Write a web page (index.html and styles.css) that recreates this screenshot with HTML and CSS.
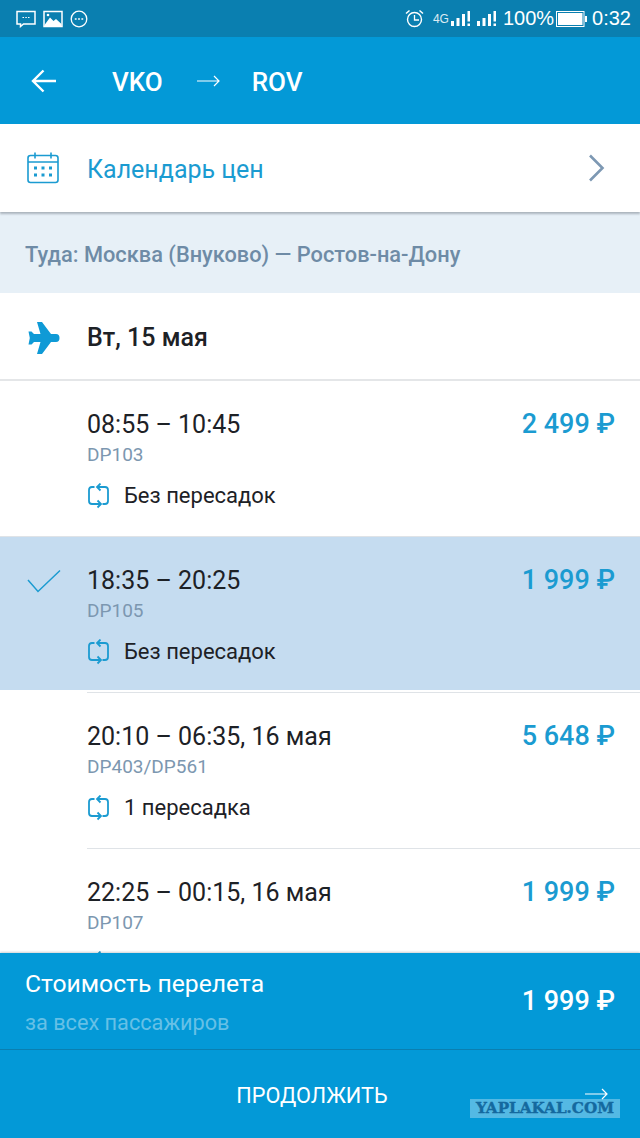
FILE: index.html
```html
<!DOCTYPE html>
<html lang="ru">
<head>
    <meta charset="UTF-8">
    <meta name="viewport" content="width=device-width, initial-scale=1.0">
    <title>VKO - ROV</title>
    <link rel="stylesheet" href="styles.css">
</head>
<body>
    <svg class="sprites" width="0" height="0">
        <symbol id="stops" viewBox="0 0 23 26">
            <path d="M7.500 4H5Q2 4 2 7V18Q2 21 5 21H14M10.500 17.500L14 21L10.500 24.500" fill="none" stroke="currentColor" stroke-width="1.800"/>
            <path d="M15.500 21H18Q21 21 21 18V7Q21 4 18 4H10M13.500 0.500L10 4L13.500 7.500" fill="none" stroke="currentColor" stroke-width="1.800"/>
        </symbol>
    </svg>

    <div class="status-bar">
        <div class="status-left">
            <svg class="ic" width="20" height="18" viewBox="0 0 20 18"><path d="M1 1.500H19V14H7.500L4.500 16.500V14H1Z" fill="none" stroke="#fff" stroke-width="1.500"/><path d="M6.500 7.500h1.500M9.300 7.500h1.500M12 7.500h1.500" stroke="#fff" stroke-width="1.200"/></svg>
            <svg class="ic" width="20" height="18" viewBox="0 0 20 18"><rect x="1" y="1.500" width="18" height="15" fill="#0a7fb0" stroke="#fff" stroke-width="1.500"/><path d="M1.500 15L7 7.500L10.500 11L13 9L18.500 14V16H1.500Z" fill="#fff"/><circle cx="5" cy="5" r="1.300" fill="#fff"/></svg>
            <svg class="ic" width="18" height="18" viewBox="0 0 18 18"><circle cx="9" cy="9" r="7.800" fill="none" stroke="#fff" stroke-width="1.300"/><path d="M4.800 9h1.800M8.100 9h1.800M11.400 9h1.800" stroke="#fff" stroke-width="1.300"/></svg>
        </div>
        <div class="status-right">
            <svg class="ic alarm" width="19" height="19" viewBox="0 0 19 19"><circle cx="9.500" cy="10.500" r="7" fill="none" stroke="#fff" stroke-width="1.400"/><path d="M9.500 6V11H14" fill="none" stroke="#fff" stroke-width="1.300"/><path d="M1 4.500L4.500 1.500M18 4.500L14.500 1.500" stroke="#fff" stroke-width="1.500"/></svg>
            <span class="net">4G</span>
            <svg class="ic" width="21" height="17" viewBox="0 0 21 17"><path d="M1 11h3v5H1zM6.500 8h3v8h-3zM12 4h3v12h-3z" fill="#fff"/><path d="M17.500 1h2.500v10.500h-2.500zM17.500 13.500h2.500v2.500h-2.500z" fill="#fff"/></svg>
            <svg class="ic signal" width="21" height="17" viewBox="0 0 21 17"><path d="M1 11h3v5H1zM6.500 8h3v8h-3zM12 4h3v12h-3z" fill="#fff"/><path d="M17.500 1h2.500v10.500h-2.500zM17.500 13.500h2.500v2.500h-2.500z" fill="#fff"/></svg>
            <span class="pct">100%</span>
            <svg class="ic" width="31" height="16" viewBox="0 0 31 16"><rect x="0.500" y="0.500" width="27.500" height="15" fill="none" stroke="#fff"/><rect x="2" y="2" width="24.500" height="12" fill="#fff"/><rect x="29" y="5" width="2" height="6" fill="#fff"/></svg>
            <span class="clock">0:32</span>
        </div>
    </div>

    <header class="app-bar">
        <svg class="back" width="26" height="24" viewBox="0 0 26 24"><path d="M25 12H2M12.500 1.500L2 12L12.500 22.500" fill="none" stroke="#fff" stroke-width="2.400"/></svg>
        <span class="code">VKO</span>
        <svg class="route-arrow" width="23" height="12" viewBox="0 0 23 12"><path d="M0 6H22M17 1L22 6L17 11" fill="none" stroke="#fff" stroke-width="1.200"/></svg>
        <span class="code">ROV</span>
    </header>

    <div class="calendar-row">
        <svg class="row-icon" width="32" height="32" viewBox="0 0 32 32">
            <rect x="1" y="3.500" width="30" height="27" rx="2.500" fill="none" stroke="#1b9bd1" stroke-width="1.600"/>
            <path d="M1 10H31M8 0.500V6.500M24 0.500V6.500" fill="none" stroke="#1b9bd1" stroke-width="1.600"/>
            <path d="M7 14.500h3v3H7zM14.500 14.500h3v3h-3zM22 14.500h3v3h-3zM7 21.500h3v3H7zM14.500 21.500h3v3h-3zM22 21.500h3v3h-3z" fill="#1b9bd1"/>
        </svg>
        <span class="calendar-label">Календарь цен</span>
        <svg class="chevron" width="18" height="28" viewBox="0 0 18 28"><path d="M2 1.500L14.500 14L2 26.500" fill="none" stroke="#7d98b3" stroke-width="2.600"/></svg>
    </div>

    <div class="direction">Туда: Москва (Внуково) — Ростов-на-Дону</div>

    <div class="date-row">
        <svg class="row-icon plane" width="33" height="32" viewBox="0 0 33 32"><path d="M10 0H15L24 12H29Q32.500 12 32.500 16Q32.500 20 29 20H24L15 32H10L13.500 20H7L4.500 22.500H1.500L2.800 16L1.500 9.500H4.500L7 12H13.500Z" fill="#0f9ad6"/></svg>
        <span class="date-label">Вт, 15 мая</span>
    </div>

    <main class="flights">
        <div class="flight">
            <div class="flight-mark"></div>
            <div class="flight-info">
                <div class="times">08:55 – 10:45</div>
                <div class="number">DP103</div>
                <div class="stops"><svg class="stops-icon" width="23" height="26"><use href="#stops"/></svg>Без пересадок</div>
            </div>
            <div class="price">2 499 ₽</div>
        </div>
        <div class="sep"></div>
        <div class="flight selected">
            <div class="flight-mark">
                <svg width="34" height="24" viewBox="0 0 34 24"><path d="M1 11L11 22.500L33 1.500" fill="none" stroke="#1b9bd1" stroke-width="1.500"/></svg>
            </div>
            <div class="flight-info">
                <div class="times">18:35 – 20:25</div>
                <div class="number">DP105</div>
                <div class="stops"><svg class="stops-icon" width="23" height="26"><use href="#stops"/></svg>Без пересадок</div>
            </div>
            <div class="price">1 999 ₽</div>
        </div>
        <div class="sep inset after-selected"></div>
        <div class="flight">
            <div class="flight-mark"></div>
            <div class="flight-info">
                <div class="times">20:10 – 06:35, 16 мая</div>
                <div class="number">DP403/DP561</div>
                <div class="stops"><svg class="stops-icon" width="23" height="26"><use href="#stops"/></svg>1 пересадка</div>
            </div>
            <div class="price">5 648 ₽</div>
        </div>
        <div class="sep inset"></div>
        <div class="flight">
            <div class="flight-mark"></div>
            <div class="flight-info">
                <div class="times">22:25 – 00:15, 16 мая</div>
                <div class="number">DP107</div>
                <div class="stops"><svg class="stops-icon" width="23" height="26"><use href="#stops"/></svg></div>
            </div>
            <div class="price">1 999 ₽</div>
        </div>
    </main>

    <div class="summary">
        <div>
            <div class="summary-title">Стоимость перелета</div>
            <div class="summary-sub">за всех пассажиров</div>
        </div>
        <div class="summary-price">1 999 ₽</div>
    </div>

    <div class="continue">
        <span>ПРОДОЛЖИТЬ</span>
        <svg class="continue-arrow" width="23" height="12" viewBox="0 0 23 12"><path d="M0 6H22M17 1L22 6L17 11" fill="none" stroke="#fff" stroke-width="1.200"/></svg>
    </div>

    <div class="watermark">YAPLAKAL.COM</div>
</body>
</html>
```

FILE: styles.css
```css
* {
    box-sizing: border-box;
}
html, body {
    margin: 0;
    height: 100%;
}
body {
    position: relative;
    display: flex;
    flex-direction: column;
    width: 640px;
    height: 1138px;
    overflow: hidden;
    font-family: Roboto, "Liberation Sans", sans-serif;
    color: #1d2126;
    background: #fff;
}
.sprites {
    position: absolute;
}
.ic {
    display: block;
    flex: none;
}

/* status bar */
.status-bar {
    flex: none;
    display: flex;
    justify-content: space-between;
    align-items: center;
    height: 37px;
    padding: 0 9px 0 16px;
    background: #0a7fb0;
    color: #fff;
}
.status-left {
    display: flex;
    align-items: center;
    gap: 7px;
}
.status-right {
    display: flex;
    align-items: center;
    font-family: "Liberation Sans", sans-serif;
}
.net {
    margin: 0 1px 0 9px;
    font-size: 12px;
    opacity: 0.85;
}
.signal {
    margin-left: 5px;
}
.pct {
    margin: 0 2px 0 6px;
    font-size: 20px;
}
.clock {
    margin-left: 5px;
    font-size: 20px;
}

/* top */
.app-bar {
    flex: none;
    display: flex;
    align-items: center;
    height: 87px;
    padding-left: 31px;
    background: #0399d7;
    color: #fff;
}
.back {
    margin-right: 55px;
}
.code {
    margin-top: 2px;
    font-size: 26px;
    font-weight: 500;
}
.route-arrow {
    margin: 1px 32px 0 34px;
}
.calendar-row {
    flex: none;
    position: relative;
    display: flex;
    align-items: center;
    height: 88px;
    padding: 0 34px 0 27px;
    background: #fff;
    box-shadow: 0 2px 2px rgba(60, 70, 80, 0.35);
}
.row-icon {
    flex: none;
    margin-right: 28px;
}
.calendar-label {
    flex: 1;
    margin-top: 2px;
    font-size: 25px;
    color: #1b9bd1;
}
.direction {
    flex: none;
    height: 81px;
    padding: 0 25px;
    line-height: 85px;
    font-size: 21.8px;
    font-weight: 500;
    color: #6e8ba6;
    background: #e7f0f7;
}
.date-row {
    flex: none;
    display: flex;
    align-items: center;
    height: 88px;
    padding: 2px 0 0 27px;
    border-bottom: 2px solid #e4e6e8;
}
.plane {
    margin: 1px 27px 0 0;
}
.date-label {
    font-size: 25px;
    font-weight: 500;
}

/* flights */
.flights {
    flex: 1;
    overflow: hidden;
    min-height: 0;
}
.flight {
    display: flex;
    height: 155px;
    padding-top: 29px;
}
.flight.selected {
    height: 153px;
    background: #c5dcf0;
}
.flight-mark {
    flex: none;
    width: 87px;
    padding: 3px 0 0 27px;
}
.flight-info {
    flex: 1;
}
.times {
    font-size: 25px;
    line-height: 30px;
}
.number {
    margin-top: 4px;
    font-size: 19px;
    line-height: 21px;
    color: #7c97b0;
}
.stops {
    display: flex;
    align-items: center;
    height: 30px;
    margin-top: 16px;
    font-size: 22px;
    line-height: 30px;
}
.stops-icon {
    flex: none;
    margin-right: 14px;
    color: #1b9bd1;
}
.price {
    flex: none;
    padding-right: 25px;
    font-size: 27px;
    font-weight: 500;
    line-height: 28px;
    color: #1b9bd1;
}
.sep {
    height: 1px;
    background: #dfe3e7;
}
.sep.inset {
    margin-left: 87px;
}
.sep.after-selected {
    margin-top: 2px;
}

/* bottom */
.summary {
    flex: none;
    position: relative;
    display: flex;
    justify-content: space-between;
    align-items: center;
    height: 97px;
    padding: 0 25px;
    background: #0399d7;
    border-bottom: 1px solid #0a7fb0;
    box-shadow: 0 -1px 2px rgba(60, 70, 80, 0.25);
    color: #fff;
}
.summary-title {
    margin-top: 3px;
    font-size: 24.7px;
    line-height: 30px;
}
.summary-sub {
    margin-top: 10px;
    font-size: 21.7px;
    line-height: 28px;
    color: #66c0e6;
}
.summary-price {
    font-size: 27px;
    font-weight: 500;
}
.continue {
    flex: none;
    position: relative;
    display: flex;
    justify-content: center;
    align-items: center;
    height: 88px;
    padding: 3px 16px 0 0;
    font-size: 21.7px;
    background: #0399d7;
    color: #fff;
}
.continue-arrow {
    position: absolute;
    right: 32px;
    top: 38px;
}
.watermark {
    position: absolute;
    left: 470px;
    top: 1099px;
    width: 150px;
    height: 19px;
    line-height: 19px;
    text-align: center;
    font-family: "DejaVu Serif", serif;
    font-size: 15.200px;
    font-weight: 700;
    color: #14699f;
    -webkit-text-stroke: 0.4px #14699f;
    background: rgba(255, 255, 255, 0.32);
}
```
